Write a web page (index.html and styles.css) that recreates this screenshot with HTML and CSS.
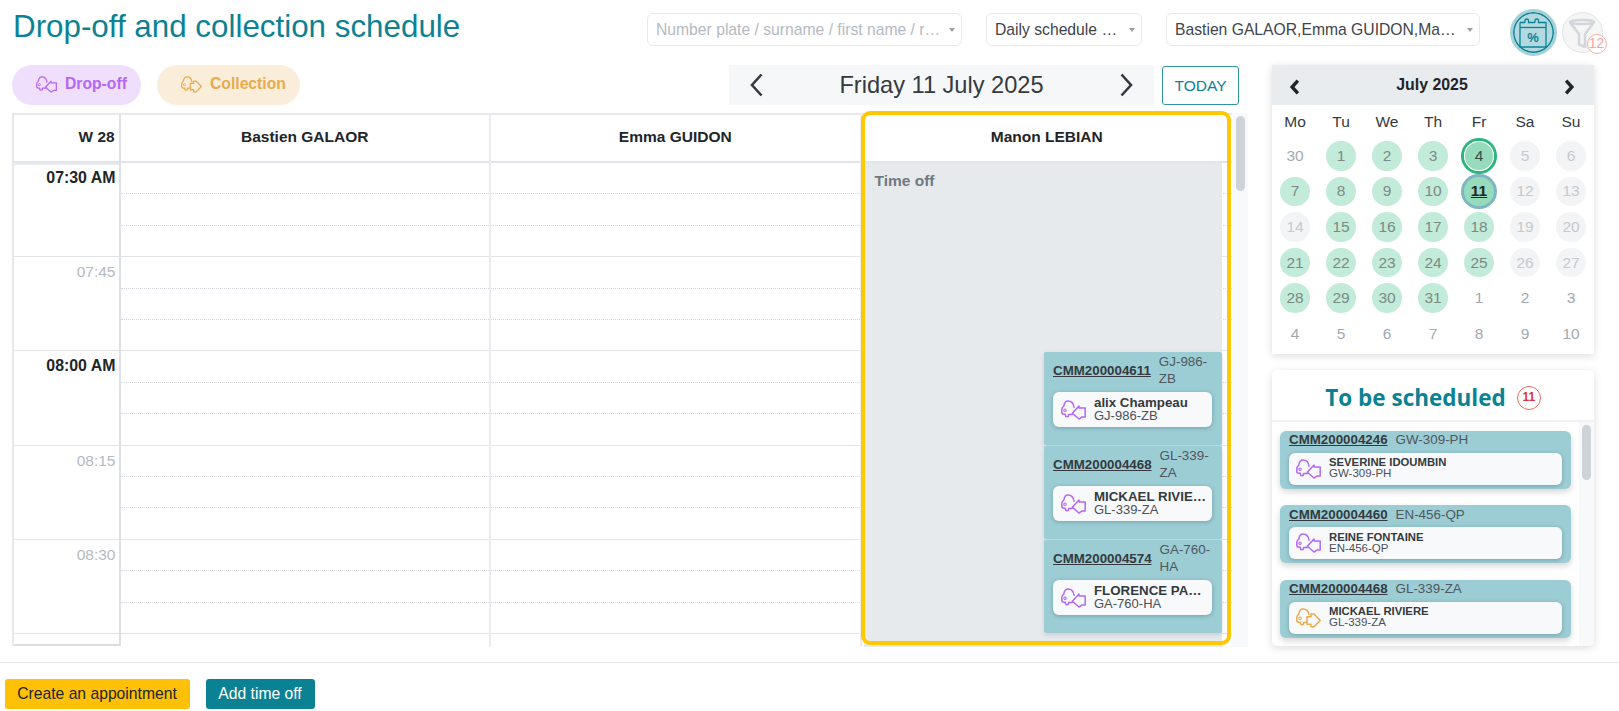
FILE: index.html
```html
<!DOCTYPE html>
<html lang="en">
<head>
<meta charset="utf-8">
<title>Drop-off and collection schedule</title>
<link rel="stylesheet" href="styles.css">
</head>
<body>
<svg class="defs" width="0" height="0" aria-hidden="true">
  <symbol id="car-in" viewBox="0 0 25 19.500">
    <path d="M13 7C12.500 3 10 .8 7 .8 4.500.8 3.200 3 2.800 5.800 1.500 6.500.8 7.800.8 9.500v2.500c0 1.300.9 2 2 2h1.600v1c0 2 3.200 2 3.200 0v-.8h3.600" fill="none" stroke="currentColor" stroke-width="1.500" stroke-linecap="round" stroke-linejoin="round"/>
    <circle cx="4" cy="10" r="1.200" fill="none" stroke="currentColor" stroke-width="1.100"/>
    <path d="M11.300 13 18 5.800v2h6.200v9h-3.400l-2.800 2z" fill="none" stroke="currentColor" stroke-width="1.500" stroke-linejoin="round"/>
  </symbol>
  <symbol id="car-out" viewBox="0 0 25 19.500">
    <path d="M13 6.500C12.500 3 10 .8 7 .8 4.500.8 3.200 3 2.800 5.800 1.500 6.500.8 7.800.8 9.500v2.500c0 1.300.9 2 2 2h1.600v1c0 2 3.200 2 3.200 0v-.8h3" fill="none" stroke="currentColor" stroke-width="1.500" stroke-linecap="round" stroke-linejoin="round"/>
    <circle cx="4" cy="10" r="1.200" fill="none" stroke="currentColor" stroke-width="1.100"/>
    <path d="M11 8.500h4V5.800h3l6.200 6.400-6.200 6.400h-3v-2.600h-4z" fill="none" stroke="currentColor" stroke-width="1.500" stroke-linejoin="round"/>
  </symbol>
</svg>

<header class="topbar">
  <h1 class="title">Drop-off and collection schedule</h1>
  <div class="filters">
    <div class="select select-search"><span class="select-text muted">Number plate / surname / first name / r…</span><i class="caret"></i></div>
    <div class="select select-view"><span class="select-text">Daily schedule …</span><i class="caret"></i></div>
    <div class="select select-staff"><span class="select-text">Bastien GALAOR,Emma GUIDON,Ma…</span><i class="caret"></i></div>
    <button class="round-btn round-active" type="button" aria-label="Availability">
      <svg width="30" height="32" viewBox="0 0 30 32" fill="none" stroke="#0b8294" stroke-width="1.300">
        <path d="M2 5.500h5M13 5.500h4M23 5.500h5V30H2V5.500"/>
        <path d="M7 5.500V3.500c0-2 3.500-2 3.500 0v2H13M17 5.500V3.500c0-2 3.500-2 3.500 0v2H23"/>
        <path d="M2 10.500h26"/>
        <text x="15" y="25" text-anchor="middle" class="pct">%</text>
      </svg>
    </button>
    <div class="round-wrap">
      <button class="round-btn round-filter" type="button" aria-label="Filter">
        <svg width="28" height="30" viewBox="0 0 28 30" fill="none" stroke="#d3d6db" stroke-width="2.600" stroke-linejoin="round">
          <ellipse cx="14" cy="4" rx="12" ry="2"/>
          <path d="M2 4.500 11 16v10.500l6 2.500V16l9-11.500"/>
        </svg>
      </button>
      <span class="filter-count">12</span>
    </div>
  </div>
</header>

<main class="main">
  <section class="planning">
    <div class="toolbar">
      <div class="legend">
        <span class="pill pill-in"><svg class="ico"><use href="#car-in"/></svg>Drop-off</span>
        <span class="pill pill-out"><svg class="ico"><use href="#car-out"/></svg>Collection</span>
      </div>
      <div class="datenav">
        <svg class="chev" viewBox="0 0 13 24"><path d="M11.500 1.500 2 12l9.500 10.500"/></svg>
        <span class="datelabel">Friday 11 July 2025</span>
        <svg class="chev" viewBox="0 0 13 24"><path d="M1.500 1.500 11 12l-9.500 10.500"/></svg>
      </div>
      <button class="today" type="button">TODAY</button>
    </div>

    <div class="scheduler">
      <div class="table">
        <div class="col col-time">
          <div class="col-head head-week">W 28</div>
          <div class="col-body time-body">
            <div class="time-row strong">07:30 AM</div>
            <div class="time-row">07:45</div>
            <div class="time-row strong">08:00 AM</div>
            <div class="time-row">08:15</div>
            <div class="time-row">08:30</div>
            <div class="time-row">08:45</div>
          </div>
        </div>

        <div class="col">
          <div class="col-head">Bastien GALAOR</div>
          <div class="col-body">
            <div class="row"><i></i><i></i><i></i></div>
            <div class="row"><i></i><i></i><i></i></div>
            <div class="row"><i></i><i></i><i></i></div>
            <div class="row"><i></i><i></i><i></i></div>
            <div class="row"><i></i><i></i><i></i></div>
            <div class="row"><i></i><i></i><i></i></div>
          </div>
        </div>

        <div class="col">
          <div class="col-head">Emma GUIDON</div>
          <div class="col-body">
            <div class="row"><i></i><i></i><i></i></div>
            <div class="row"><i></i><i></i><i></i></div>
            <div class="row"><i></i><i></i><i></i></div>
            <div class="row"><i></i><i></i><i></i></div>
            <div class="row"><i></i><i></i><i></i></div>
            <div class="row"><i></i><i></i><i></i></div>
          </div>
        </div>

        <div class="col col-selected">
          <div class="col-head">Manon LEBIAN</div>
          <div class="col-body">
            <div class="row"><i></i><i></i><i></i></div>
            <div class="row"><i></i><i></i><i></i></div>
            <div class="row"><i></i><i></i><i></i></div>
            <div class="row"><i></i><i></i><i></i></div>
            <div class="row"><i></i><i></i><i></i></div>
            <div class="row"><i></i><i></i><i></i></div>
            <div class="timeoff">Time off</div>
            <article class="event event-1">
              <div class="event-head"><a class="ref">CMM200004611</a><span class="plate">GJ-986-ZB</span></div>
              <div class="vehicle"><svg class="ico vehicle-ico in"><use href="#car-in"/></svg><div class="vehicle-text"><b>alix Champeau</b><span>GJ-986-ZB</span></div></div>
            </article>
            <article class="event event-2">
              <div class="event-head"><a class="ref">CMM200004468</a><span class="plate">GL-339-ZA</span></div>
              <div class="vehicle"><svg class="ico vehicle-ico in"><use href="#car-in"/></svg><div class="vehicle-text"><b>MICKAEL RIVIE…</b><span>GL-339-ZA</span></div></div>
            </article>
            <article class="event event-3">
              <div class="event-head"><a class="ref">CMM200004574</a><span class="plate">GA-760-HA</span></div>
              <div class="vehicle"><svg class="ico vehicle-ico in"><use href="#car-in"/></svg><div class="vehicle-text"><b>FLORENCE PA…</b><span>GA-760-HA</span></div></div>
            </article>
          </div>
        </div>
      </div>
      <div class="scroll-track"><div class="scroll-thumb thumb-main"></div></div>
    </div>
  </section>

  <aside class="side">
    <div class="calendar">
      <div class="cal-head">
        <svg class="cal-chev" viewBox="0 0 10 14"><path d="M7.500 1.500 2.500 7l5 5.500"/></svg>
        <span>July 2025</span>
        <svg class="cal-chev" viewBox="0 0 10 14"><path d="M2.500 1.500 7.500 7l-5 5.500"/></svg>
      </div>
      <div class="cal-grid cal-week">
        <span>Mo</span><span>Tu</span><span>We</span><span>Th</span><span>Fr</span><span>Sa</span><span>Su</span>
      </div>
      <div class="cal-grid cal-days">
        <span class="d">30</span><span class="d on">1</span><span class="d on">2</span><span class="d on">3</span><span class="d on sel-green">4</span><span class="d off">5</span><span class="d off">6</span>
        <span class="d on">7</span><span class="d on">8</span><span class="d on">9</span><span class="d on">10</span><span class="d on sel-today">11</span><span class="d off">12</span><span class="d off">13</span>
        <span class="d off">14</span><span class="d on">15</span><span class="d on">16</span><span class="d on">17</span><span class="d on">18</span><span class="d off">19</span><span class="d off">20</span>
        <span class="d on">21</span><span class="d on">22</span><span class="d on">23</span><span class="d on">24</span><span class="d on">25</span><span class="d off">26</span><span class="d off">27</span>
        <span class="d on">28</span><span class="d on">29</span><span class="d on">30</span><span class="d on">31</span><span class="d">1</span><span class="d">2</span><span class="d">3</span>
        <span class="d">4</span><span class="d">5</span><span class="d">6</span><span class="d">7</span><span class="d">8</span><span class="d">9</span><span class="d">10</span>
      </div>
    </div>

    <div class="backlog">
      <div class="backlog-head"><h2>To be scheduled</h2><span class="count">11</span></div>
      <div class="backlog-body">
        <div class="backlog-list">
          <article class="job">
            <div class="job-head"><a class="ref">CMM200004246</a><span class="plate">GW-309-PH</span></div>
            <div class="job-card"><svg class="ico vehicle-ico in"><use href="#car-in"/></svg><div class="job-text"><b>SEVERINE IDOUMBIN</b><span>GW-309-PH</span></div></div>
          </article>
          <article class="job">
            <div class="job-head"><a class="ref">CMM200004460</a><span class="plate">EN-456-QP</span></div>
            <div class="job-card"><svg class="ico vehicle-ico in"><use href="#car-in"/></svg><div class="job-text"><b>REINE FONTAINE</b><span>EN-456-QP</span></div></div>
          </article>
          <article class="job">
            <div class="job-head"><a class="ref">CMM200004468</a><span class="plate">GL-339-ZA</span></div>
            <div class="job-card"><svg class="ico vehicle-ico out"><use href="#car-out"/></svg><div class="job-text"><b>MICKAEL RIVIERE</b><span>GL-339-ZA</span></div></div>
          </article>
        </div>
        <div class="scroll-track track-small"><div class="scroll-thumb thumb-small"></div></div>
      </div>
    </div>
  </aside>
</main>

<footer class="footer">
  <button class="btn btn-yellow" type="button">Create an appointment</button>
  <button class="btn btn-teal" type="button">Add time off</button>
</footer>
</body>
</html>
```

FILE: styles.css
```css
* { box-sizing: border-box; }
html, body { margin: 0; padding: 0; }
body {
  width: 1619px;
  height: 711px;
  overflow: hidden;
  background: #fff;
  color: #212529;
  font-family: "Liberation Sans", Arial, sans-serif;
  display: flex;
  flex-direction: column;
}
.defs { position: absolute; }
button { font-family: inherit; cursor: pointer; }

/* top bar */
.topbar {
  height: 58px;
  display: flex;
  align-items: flex-start;
  justify-content: space-between;
  padding: 5px 16.500px 0 13px;
  flex: none;
}
.title {
  margin: 0;
  font-size: 31.350px;
  line-height: 44px;
  font-weight: 400;
  color: #0b8294;
}
.filters { display: flex; align-items: flex-start; gap: 24px; padding-top: 8px; }
.select {
  height: 33px;
  display: flex;
  align-items: center;
  justify-content: space-between;
  gap: 3px;
  padding: 0 6px 0 8.500px;
  background: #fff;
  border: 1.500px solid #e8eaed;
  border-radius: 6px;
  font-size: 15.700px;
  color: #3f4449;
}
.select-text { white-space: nowrap; overflow: hidden; }
.muted { color: #b4bac1; }
.select-search { width: 315px; }
.select-view { width: 156px; }
.select-staff { width: 314px; }
.caret { width: 0; height: 0; border: 3.500px solid transparent; border-top: 4.500px solid #9aa0a6; border-bottom: 0; flex: none; }
.round-btn {
  border-radius: 50%;
  padding: 0;
  display: flex;
  align-items: center;
  justify-content: center;
}
.round-active {
  width: 47px;
  height: 47px;
  margin: -4px 0 0 6px;
  background: #b2d9df;
  border: 3px solid #a5d2d9;
  box-shadow: inset 0 0 0 1.500px #0b8294, inset 0 0 0 3px #b2d9df;
}
.pct { font: bold 13px "Liberation Sans", sans-serif; fill: #0b8294; stroke: none; }
.round-wrap { position: relative; margin: -1px 0 0 -19px; }
.round-filter { width: 41px; height: 41px; background: #f5f5f6; border: 1.500px solid #e2e4e7; }
.filter-count {
  position: absolute;
  left: 25px;
  top: 22px;
  width: 20px;
  height: 20px;
  border-radius: 50%;
  border: 1.500px solid #f7b1a8;
  background: rgba(255,255,255,.7);
  color: #f5a79d;
  font-size: 14px;
  line-height: 17px;
  text-align: center;
}

/* main */
.main {
  flex: none;
  height: 604px;
  display: flex;
  gap: 24px;
  padding: 7px 25px 0 12px;
}
.planning { width: 1236px; flex: none; }
.toolbar { display: flex; align-items: stretch; height: 40px; margin-bottom: 8px; padding-right: 9px; gap: 8px; }
.legend { display: flex; gap: 16px; margin-right: auto; }
.pill {
  height: 40px;
  border-radius: 20px;
  display: flex;
  align-items: center;
  gap: 8px;
  padding: 0 0 2px 24px;
  font-size: 15.700px;
  font-weight: 700;
}
.pill-in { width: 129px; background: #efdffd; color: #b566f5; }
.pill-out { width: 143px; background: #faeedb; color: #e9aa4c; }
.ico { width: 21px; height: 17px; flex: none; }
.datenav {
  width: 425px;
  display: flex;
  align-items: center;
  justify-content: space-between;
  padding: 0 21px;
  background: #f6f7f9;
}
.chev { width: 13px; height: 24px; fill: none; stroke: #343a40; stroke-width: 2.600; }
.datelabel { font-size: 23.600px; color: #343a40; }
.today {
  width: 77px;
  background: #fff;
  border: 1.500px solid #2f93a3;
  border-radius: 3px;
  color: #0b8294;
  font-size: 15.500px;
  padding: 0;
  margin-top: 1px;
}

/* scheduler */
.scheduler { display: flex; height: 534px; }
.table { flex: 1; display: grid; grid-template-columns: 108.500px repeat(3, 1fr); border-top: 2px solid #e7e9ec; }
.col { min-width: 0; height: 532px; display: flex; flex-direction: column; border-right: 2px solid #eaecef; position: relative; }
.col-head {
  height: 48px;
  flex: none;
  display: flex;
  align-items: center;
  justify-content: center;
  padding-bottom: 2px;
  font-size: 15.500px;
  font-weight: 700;
  border-bottom: 2px solid #e1e4e9;
}
.col-body { flex: 1; position: relative; overflow: hidden; min-height: 0; }
.row { height: 94.200px; display: flex; flex-direction: column; border-bottom: 1.500px solid #e3e5e9; }
.row i { flex: 1; display: block; border-bottom: 1px dotted #d3d7dd; }
.row i:last-child { border-bottom: 0; }

.col-time { border-left: 2px solid #e6e8ec; border-right-color: #dde0e5; height: 531px; }
.head-week { justify-content: flex-end; padding-right: 4px; font-size: 15.400px; }
.time-body { border-top: 2px solid #e9ebee; border-bottom: 2px solid #d9dce1; }
.time-row {
  height: 94.200px;
  border-bottom: 1.500px solid #e3e5e9;
  padding: 6px 3px 0 0;
  text-align: right;
  font-size: 15.500px;
  line-height: 18px;
  color: #b4bac1;
}
.time-row:first-child { height: 92.200px; padding-top: 4px; }
.time-row.strong { color: #212529; font-weight: 700; font-size: 15.900px; }

/* selected column */
.col-selected { border-right: 0; }
.col-selected::after {
  content: "";
  position: absolute;
  left: -1px;
  right: 1px;
  top: -4px;
  bottom: 2px;
  border: 4px solid #ffc800;
  border-radius: 9px;
  pointer-events: none;
}
.timeoff {
  position: absolute;
  left: 2px;
  right: 10px;
  top: 0;
  bottom: 0;
  background: #e7eaed;
  padding: 9px 0 0 11px;
  font-size: 15.500px;
  line-height: 17px;
  font-weight: 700;
  color: #6f7881;
}
.event {
  position: absolute;
  right: 10px;
  width: 178px;
  height: 93px;
  background: #9ccdd4;
  border-radius: 2px;
  padding: 0 9px;
  box-shadow: 0 2px 5px rgba(0,0,0,.12);
}
.event-1 { top: 189px; }
.event-2 { top: 283px; }
.event-3 { top: 377px; }
.event-head { height: 40px; display: flex; align-items: center; gap: 8px; padding-bottom: 4px; }
.ref { font-size: 13.330px; font-weight: 700; color: #343a40; text-decoration: underline; white-space: nowrap; }
.plate { font-size: 13.400px; line-height: 17px; color: #4f575e; }
.vehicle, .job-card {
  display: flex;
  align-items: center;
  background: #f8f9fb;
  border-radius: 6px;
  box-shadow: 0 1px 4px rgba(0,50,60,.28);
}
.vehicle { height: 35px; gap: 8px; padding: 0 6px 0 8px; width: 159px; }
.vehicle-ico { width: 25px; height: 20px; }
.vehicle-ico.in { color: #b566f5; }
.vehicle-ico.out { color: #e9aa4c; }
.vehicle-text { min-width: 0; display: flex; flex-direction: column; color: #4a5056; margin-top: -2px; }
.vehicle-text b { font-size: 13.300px; line-height: 13px; color: #343a40; white-space: nowrap; }
.vehicle-text span { font-size: 13px; line-height: 13px; }

.scroll-track { width: 16px; background: #f8f9fa; display: flex; justify-content: center; flex: none; }
.scroll-thumb { width: 9px; background: #ced3d9; border-radius: 5px; }
.thumb-main { height: 75px; margin-top: 3px; }

/* side */
.side { width: 322px; flex: none; display: flex; flex-direction: column; gap: 16px; }
.calendar { height: 289px; background: #fff; box-shadow: 0 2px 8px rgba(0,0,0,.14); flex: none; }
.cal-head {
  height: 40px;
  background: #e9ecef;
  display: flex;
  align-items: center;
  justify-content: space-between;
  padding: 0 19px 0 17px;
  font-size: 15.900px;
  font-weight: 700;
}
.cal-chev { width: 12px; height: 16px; fill: none; stroke: #212529; stroke-width: 3; margin-top: 3px; }
.cal-grid { display: grid; grid-template-columns: repeat(7, 46px); }
.cal-week { height: 33px; align-items: center; text-align: center; font-size: 15.500px; color: #343a40; }
.cal-days { grid-auto-rows: 35.600px; justify-items: center; align-items: center; }
.d {
  width: 29.500px;
  height: 29.500px;
  border-radius: 50%;
  display: flex;
  align-items: center;
  justify-content: center;
  font-size: 15.500px;
  color: #a4a9ae;
}
.d.on { background: #c3ebd9; color: #7c8a84; }
.d.off { background: #f3f4f6; color: #c6c9ce; }
.d.sel-green {
  background: #96dcbc;
  color: #3a4a44;
  box-shadow: 0 0 0 1px #fff inset, 0 0 0 3px #2cb67d;
}
.d.sel-today {
  background: #96dcbc;
  color: #212529;
  font-weight: 700;
  text-decoration: underline;
  box-shadow: 0 0 0 3px #7fb6c4;
}

.backlog {
  height: 276px;
  background: #fff;
  border-radius: 5px;
  box-shadow: 0 2px 8px rgba(0,0,0,.14);
  display: flex;
  flex-direction: column;
  overflow: hidden;
}
.backlog-head {
  height: 52px;
  flex: none;
  display: flex;
  align-items: center;
  justify-content: center;
  gap: 11px;
  border-bottom: 2px solid #f0f1f3;
  padding: 5px 0 0;
}
.backlog-head h2 { margin: 0; font: 700 22.500px "Open Sans", sans-serif; color: #0b8294; }
.count {
  width: 24px;
  height: 24px;
  border: 1.500px solid #ec6a5e;
  border-radius: 50%;
  color: #dc3545;
  font-size: 12px;
  font-weight: 700;
  line-height: 21px;
  text-align: center;
}
.backlog-body { flex: 1; display: flex; min-height: 0; }
.backlog-list { flex: 1; display: flex; flex-direction: column; gap: 16.500px; padding: 8.500px 8px 0; }
.track-small { width: 15px; }
.thumb-small { height: 55px; margin-top: 3px; }
.job {
  height: 58px;
  background: #9ccdd4;
  border-radius: 6px;
  padding: 0 9px;
  box-shadow: 0 3px 6px rgba(0,0,0,.16);
  flex: none;
}
.job-head { height: 22px; display: flex; align-items: center; gap: 8px; padding-bottom: 4px; }
.job-card { height: 32px; gap: 8px; padding: 0 6px 0 7px; }
.job-text { display: flex; flex-direction: column; color: #4a5056; margin-top: -1px; }
.job-text b { font-size: 11.300px; line-height: 11px; color: #343a40; }
.job-text span { font-size: 11.500px; line-height: 11px; }

/* footer */
.footer {
  flex: none;
  height: 49px;
  border-top: 1.500px solid #e6e8ec;
  display: flex;
  gap: 16px;
  padding: 16px 0 0 4.500px;
}
.btn {
  height: 30px;
  border: 0;
  border-radius: 3px;
  padding: 0;
  font-size: 15.700px;
}
.btn-yellow { width: 185px; background: #ffc107; color: #212529; }
.btn-teal { width: 109px; background: #0b8294; color: #fff; }
```
